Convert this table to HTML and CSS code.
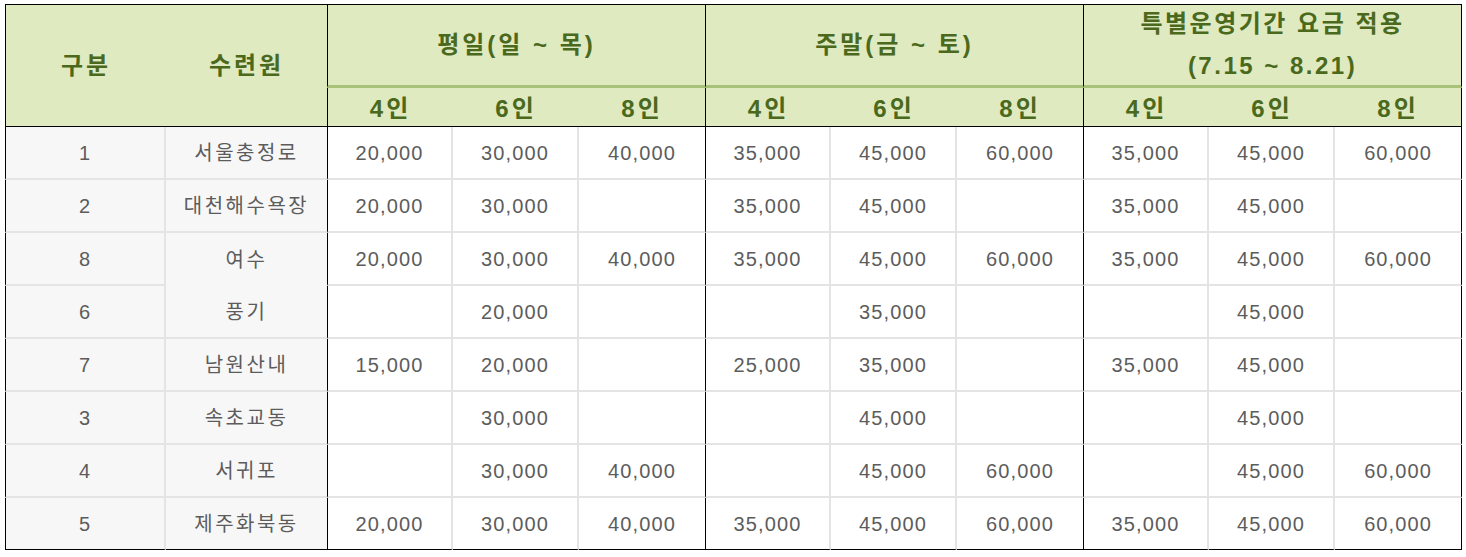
FILE: index.html
```html
<!DOCTYPE html>
<html lang="ko">
<head>
<meta charset="utf-8">
<title>수련원 요금표</title>
<link rel="stylesheet" href="styles.css">
</head>
<body>
<table class="fee">
  <colgroup>
    <col class="c-no"><col class="c-name">
    <col class="c-d"><col class="c-d"><col class="c-d">
    <col class="c-d"><col class="c-d"><col class="c-d">
    <col class="c-d"><col class="c-d"><col class="c-last">
  </colgroup>
  <thead>
    <tr class="h1">
      <th rowspan="2" class="hd edge-l">구분</th>
      <th rowspan="2" class="hd">수련원</th>
      <th colspan="3" class="grp gs">평일(일 ~ 목)</th>
      <th colspan="3" class="grp gs">주말(금 ~ 토)</th>
      <th colspan="3" class="grp gs edge-r two"><div class="lines">특별운영기간 요금 적용<br>(7.15 ~ 8.21)</div></th>
    </tr>
    <tr class="h2">
      <th class="gs">4인</th><th>6인</th><th>8인</th>
      <th class="gs">4인</th><th>6인</th><th>8인</th>
      <th class="gs">4인</th><th>6인</th><th class="edge-r">8인</th>
    </tr>
  </thead>
  <tbody>
    <tr>
      <td class="no">1</td><td class="name">서울충정로</td>
      <td class="gs">20,000</td><td>30,000</td><td class="ge">40,000</td>
      <td class="gs">35,000</td><td>45,000</td><td class="ge">60,000</td>
      <td class="gs">35,000</td><td>45,000</td><td class="edge-r">60,000</td>
    </tr>
    <tr>
      <td class="no">2</td><td class="name">대천해수욕장</td>
      <td class="gs">20,000</td><td>30,000</td><td class="ge"></td>
      <td class="gs">35,000</td><td>45,000</td><td class="ge"></td>
      <td class="gs">35,000</td><td>45,000</td><td class="edge-r"></td>
    </tr>
    <tr>
      <td class="no">8</td><td class="name open">여수</td>
      <td class="gs">20,000</td><td>30,000</td><td class="ge">40,000</td>
      <td class="gs">35,000</td><td>45,000</td><td class="ge">60,000</td>
      <td class="gs">35,000</td><td>45,000</td><td class="edge-r">60,000</td>
    </tr>
    <tr>
      <td class="no">6</td><td class="name">풍기</td>
      <td class="gs"></td><td>20,000</td><td class="ge"></td>
      <td class="gs"></td><td>35,000</td><td class="ge"></td>
      <td class="gs"></td><td>45,000</td><td class="edge-r"></td>
    </tr>
    <tr>
      <td class="no">7</td><td class="name">남원산내</td>
      <td class="gs">15,000</td><td>20,000</td><td class="ge"></td>
      <td class="gs">25,000</td><td>35,000</td><td class="ge"></td>
      <td class="gs">35,000</td><td>45,000</td><td class="edge-r"></td>
    </tr>
    <tr>
      <td class="no">3</td><td class="name">속초교동</td>
      <td class="gs"></td><td>30,000</td><td class="ge"></td>
      <td class="gs"></td><td>45,000</td><td class="ge"></td>
      <td class="gs"></td><td>45,000</td><td class="edge-r"></td>
    </tr>
    <tr>
      <td class="no">4</td><td class="name">서귀포</td>
      <td class="gs"></td><td>30,000</td><td class="ge">40,000</td>
      <td class="gs"></td><td>45,000</td><td class="ge">60,000</td>
      <td class="gs"></td><td>45,000</td><td class="edge-r">60,000</td>
    </tr>
    <tr class="last">
      <td class="no">5</td><td class="name">제주화북동</td>
      <td class="gs">20,000</td><td>30,000</td><td class="ge">40,000</td>
      <td class="gs">35,000</td><td>45,000</td><td class="ge">60,000</td>
      <td class="gs">35,000</td><td>45,000</td><td class="edge-r">60,000</td>
    </tr>
  </tbody>
</table>
</body>
</html>
```

FILE: styles.css
```css
html, body {
  background: #ffffff;
}
body {
  margin: 4px 0 0 5px;
  font-family: "Liberation Sans", "Noto Sans CJK KR", sans-serif;
}
.fee {
  border-collapse: separate;
  border-spacing: 0;
  table-layout: fixed;
  width: 1457px;
}
.c-no, .c-name { width: 161px; }
.c-d { width: 126px; }
.c-last { width: 127px; }

.fee th, .fee td {
  padding: 0;
  text-align: center;
  vertical-align: middle;
}

/* header */
.fee th {
  background: #dfeac1;
  color: #4b691c;
  font-size: 24px;
  font-weight: bold;
  letter-spacing: 3px;
  line-height: 26px;
  border-bottom: 1px solid #000;
}
.h1 { height: 84px; }
.h2 { height: 39px; }
.h2 th { padding-top: 3px; }
.h1 th {
  border-top: 1px solid #000;
}
.h1 th.grp {
  border-bottom: 3px solid #a9c27a;
}
.h1 th.two {
  letter-spacing: 2.5px;
}
.lines {
  line-height: 42px;
  margin: -2px 0 -2px;
}
.fee th.edge-l { border-left: 1px solid #000; }
.fee th.gs { border-left: 1px solid #000; }
.fee th.edge-r { border-right: 1px solid #000; }

/* body */
.fee tbody tr { height: 53px; }
.fee tbody tr.last { height: 52px; }
.fee td {
  background: #ffffff;
  color: #5c5c5c;
  font-size: 20px;
  letter-spacing: 1.1px;
  line-height: 24px;
  border-bottom: 2px solid #e4e4e4;
  border-right: 2px solid #e4e4e4;
}
.fee td.no, .fee td.name {
  background: #f7f7f7;
}
.fee td.name { letter-spacing: 2.5px; }
.fee td.no { border-left: 1px solid #000; }
.fee td.name { border-right: none; }
.fee td.name.open { border-bottom: none; }
.fee td.gs { border-left: 1px solid #000; }
.fee td.ge { border-right: none; }
.fee td.edge-r { border-right: 1px solid #000; }
.fee tr.last td { border-bottom: 1px solid #000; }
```
